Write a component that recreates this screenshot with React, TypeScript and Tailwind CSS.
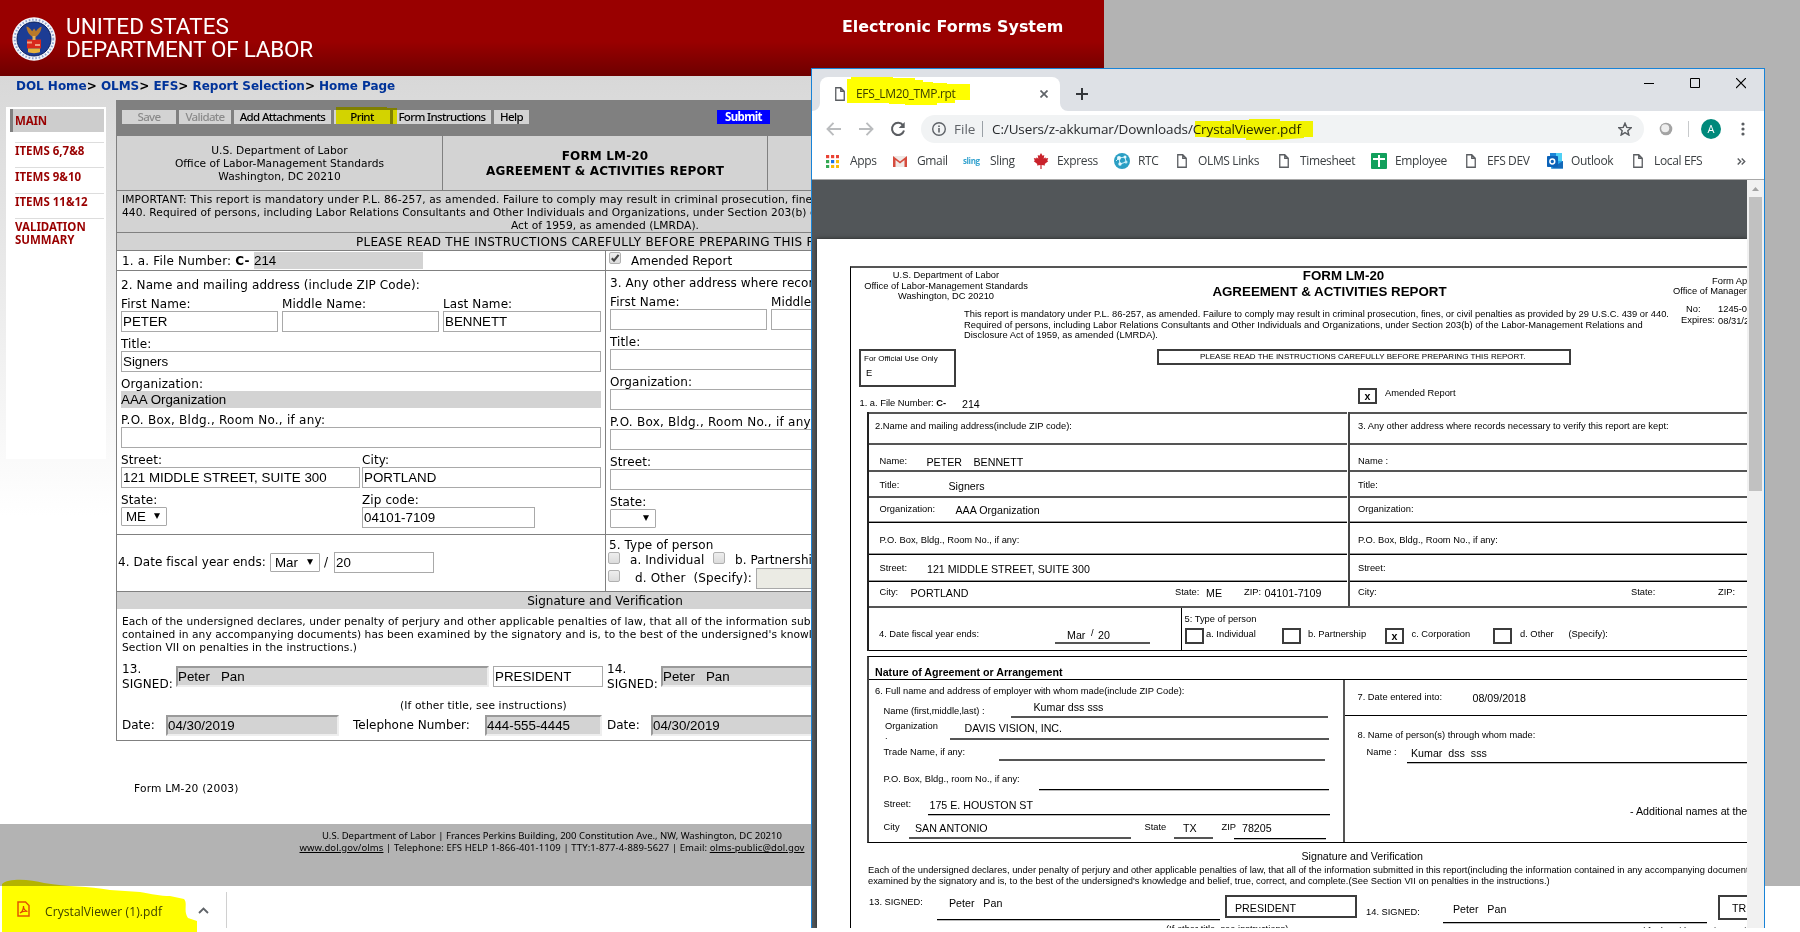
import React from "react";

/* ---------- shared pieces ---------- */

type Kids = { children?: React.ReactNode; className?: string };

const Label = ({ children, className = "tracking-[0.1px]" }: Kids) => (
  <div className={`h-[19px] whitespace-nowrap pt-[4px] text-[12px] leading-[16px] ${className}`}>{children}</div>
);

const Field = ({ children, className = "" }: Kids) => (
  <div
    className={`h-[21px] shrink-0 whitespace-pre border border-[#a9a9a9] bg-white pl-[1px] font-['Liberation_Sans',Arial,sans-serif] text-[13.33px] leading-[19px] tracking-normal ${className}`}
  >
    {children}
  </div>
);

const InsetField = ({ children, className = "" }: Kids) => (
  <div
    className={`h-[21px] shrink-0 whitespace-pre border-2 border-[#eee] border-l-[#9a9a9a] border-t-[#9a9a9a] bg-[#d3d3d3] font-['Liberation_Sans',Arial,sans-serif] text-[13.33px] leading-[17px] tracking-normal ${className}`}
  >
    {children}
  </div>
);

const Select = ({ children, className = "" }: Kids) => (
  <div
    className={`flex h-[19px] shrink-0 items-center justify-between rounded-[1px] border border-[#a9a9a9] bg-white pl-[4px] pr-[6px] font-['Liberation_Sans',Arial,sans-serif] text-[13.33px] leading-[17px] tracking-normal ${className}`}
  >
    <span>{children}</span>
    <svg width="6" height="6" viewBox="0 0 6 6" className="-mt-px">
      <path d="M0 0.3h6L3 6z" fill="#000" />
    </svg>
  </div>
);

const Check = ({ checked = false, className = "" }: { checked?: boolean; className?: string }) => (
  <span
    className={`block h-[12px] w-[12px] shrink-0 rounded-[2px] border border-[#b0b0b0] bg-linear-to-b from-[#eee] to-[#dcdcdc] ${className}`}
  >
    {checked && (
      <svg width="10" height="10" viewBox="0 0 10 10">
        <path d="M1.8 5.2 4 7.6 8.6 1.8" stroke="#444" strokeWidth="2.1" fill="none" />
      </svg>
    )}
  </span>
);

/* ---------- Department of Labor page ---------- */

const Seal = () => (
  <svg width="44" height="44" viewBox="0 0 44 44">
    <circle cx="22" cy="22" r="21.7" fill="#f4f6fb" />
    <circle cx="22" cy="22" r="19.3" fill="none" stroke="#8fa3cf" strokeWidth="2" strokeDasharray="1.6 1.8" />
    <circle cx="22" cy="22" r="17" fill="#1c3c94" stroke="#0c1f5c" strokeWidth="1" />
    <path d="M14.5 9.5c2 .3 4.5 2.8 5.6 4.8l2-2.8 1.900 2.800c1.200-2 3.500-4.300 5.500-4.600 0 4-2.600 8-5.700 10h-3.600c-3.100-2-5.700-6-5.700-10.200z" fill="#b9792a" />
    <rect x="15" y="22.5" width="14" height="9" fill="#d8291c" />
    <path d="M15 24.5h5v2h-5zM23 27h5v2h-5z" fill="#f0a080" />
    <path d="M16 31.5h12v3.500c-2 1.500-10 1.500-12 0z" fill="#e7b33c" />
    <path d="M20.5 19h3v4h-3z" fill="#e2b25a" />
  </svg>
);

const Header = () => (
  <header className="flex h-[76px] bg-linear-to-b from-[#990000] from-55% to-[#6e0000] pl-[12px] text-white">
    <div className="mt-[17px] h-[44px] w-[54px] shrink-0">
      <Seal />
    </div>
    <div className="mt-[15px] w-[776px] shrink-0 whitespace-nowrap font-[Roboto,sans-serif] text-[22.5px] leading-[23px]">
      <div className="tracking-[0.1px]">UNITED STATES</div>
      <div className="tracking-[-0.27px]">DEPARTMENT OF LABOR</div>
    </div>
    <div className="mt-[17px] whitespace-nowrap text-[15.9px] font-bold leading-[20px]">Electronic Forms System</div>
  </header>
);

const crumbs = ["DOL Home", "OLMS", "EFS", "Report Selection", "Home Page"];

const Breadcrumb = () => (
  <nav className="h-[24px] whitespace-pre pl-[16px] pt-[1px] text-[12px] font-bold leading-[18px] tracking-[-0.03px] text-[#003399]">
    {crumbs.map((c, i) => (
      <span key={c}>
        {c}
        {i < crumbs.length - 1 && <span className="text-black">&gt; </span>}
      </span>
    ))}
  </nav>
);

const Sidebar = () => (
  <aside className="ml-[6px] mt-[7px] h-[352px] w-[100px] shrink-0 bg-white pl-[4px] pr-[2px] pt-[2px] font-['Noto_Sans',sans-serif] text-[11.5px] font-bold leading-[13px] text-[#990000]">
    <div className="h-[23px] border-l-[3px] border-[#808080] bg-[#cdcdcd] pl-[2px] leading-[24px] tracking-[-0.2px]">MAIN</div>
    <div className="ml-[5px] mt-[10px]">
      <div className="h-[25px] border-t border-[#ddd] pt-[1px]">ITEMS 6,7&amp;8</div>
      <div className="h-[26px] border-t border-[#ddd] pt-[2px]">ITEMS 9&amp;10</div>
      <div className="h-[25px] border-t border-[#ddd] pt-[1px]">ITEMS 11&amp;12</div>
      <div className="border-t border-[#ddd] pt-[1px]">
        VALIDATION
        <br />
        SUMMARY
      </div>
    </div>
  </aside>
);

const Btn = ({ children, className = "" }: Kids) => (
  <div className={`h-[14px] shrink-0 whitespace-nowrap bg-[#d3d3d3] text-center ${className}`}>{children}</div>
);

const Toolbar = () => (
  <div className="flex h-[36px] gap-[3px] bg-[#808080] pl-[6px] pt-[10px] font-['Noto_Sans',sans-serif] text-[11.5px] font-medium leading-[14px] tracking-[-0.65px] text-black">
    <Btn className="w-[54px] text-[#8a8a8a]">Save</Btn>
    <Btn className="w-[52px] text-[#8a8a8a]">Validate</Btn>
    <Btn className="w-[97px]">Add Attachments</Btn>
    <div className="relative">
      <Btn className="w-[56px]">Print</Btn>
      <svg className="absolute -top-[3px] left-[2px] mix-blend-multiply" width="61" height="17" viewBox="0 0 61 17">
        <path d="M0 0h51v1h10v16H0z" fill="#ffff00" />
      </svg>
    </div>
    <Btn className="w-[98px]">Form Instructions</Btn>
    <Btn className="w-[35px]">Help</Btn>
    <Btn className="ml-[185px] w-[53px] !bg-[#0000ff] font-bold text-white">Submit</Btn>
  </div>
);

const AddressLeft = () => (
  <div className="w-[488px] shrink-0 pl-[4px]">
    <div className="h-[21px] pt-[6px] text-[12px] leading-[16px] tracking-[0.1px]">2. Name and mailing address (include ZIP Code):</div>
    <div className="flex gap-[4px]">
      <div className="w-[157px]">
        <Label>First Name:</Label>
        <Field>PETER</Field>
      </div>
      <div className="w-[157px]">
        <Label>Middle Name:</Label>
        <Field />
      </div>
      <div className="w-[158px]">
        <Label>Last Name:</Label>
        <Field>BENNETT</Field>
      </div>
    </div>
    <Label>Title:</Label>
    <Field className="w-[480px]">Signers</Field>
    <Label>Organization:</Label>
    <div className="h-[17px] w-[480px] bg-[#d3d3d3] font-['Liberation_Sans',Arial,sans-serif] text-[13.33px] leading-[17px]">
      AAA Organization
    </div>
    <Label className="tracking-[0.24px]">P.O. Box, Bldg., Room No., if any:</Label>
    <Field className="w-[480px]" />
    <div className="flex gap-[2px]">
      <div className="w-[239px]">
        <Label>Street:</Label>
        <Field>121 MIDDLE STREET, SUITE 300</Field>
        <Label>State:</Label>
        <Select className="w-[46px]">ME</Select>
      </div>
      <div className="w-[239px]">
        <Label>City:</Label>
        <Field>PORTLAND</Field>
        <Label>Zip code:</Label>
        <Field className="w-[173px]">04101-7109</Field>
      </div>
    </div>
  </div>
);

const AddressRight = () => (
  <div className="w-[499px] border-l border-[#808080] pl-[4px]">
    <div className="h-[19px] whitespace-nowrap pt-[4px] text-[12px] leading-[16px] tracking-[0.1px]">
      3. Any other address where records necessary to verify this report are kept:
    </div>
    <div className="flex gap-[4px]">
      <div className="w-[157px]">
        <Label>First Name:</Label>
        <Field />
      </div>
      <div className="w-[157px]">
        <Label>Middle Name:</Label>
        <Field />
      </div>
    </div>
    <Label>Title:</Label>
    <Field />
    <Label>Organization:</Label>
    <Field />
    <Label className="tracking-[0.24px]">P.O. Box, Bldg., Room No., if any:</Label>
    <Field />
    <Label>Street:</Label>
    <Field />
    <Label>State:</Label>
    <Select className="w-[46px]" />
  </div>
);

const Signature = () => (
  <div className="h-[132px] border-b border-[#808080] pl-[5px] text-[12px] leading-[15px]">
    <div className="h-[53px] whitespace-nowrap pt-[6px] text-[10.67px] leading-[13px] tracking-[0.05px]">
      Each of the undersigned declares, under penalty of perjury and other applicable penalties of law, that all of the information submitted
      <br />
      contained in any accompanying documents) has been examined by the signatory and is, to the best of the undersigned's knowledge
      <br />
      Section VII on penalties in the instructions.)
    </div>
    <div className="flex h-[34px] tracking-[0.1px]">
      <div className="w-[54px]">
        13.
        <br />
        SIGNED:
      </div>
      <InsetField className="mt-[4px] w-[313px]">{"Peter   Pan"}</InsetField>
      <Field className="ml-[4px] mt-[4px] w-[110px]">PRESIDENT</Field>
      <div className="ml-[4px] w-[54px] shrink-0">
        14.
        <br />
        SIGNED:
      </div>
      <InsetField className="mt-[4px] w-[313px]">{"Peter   Pan"}</InsetField>
    </div>
    <div className="h-[19px] pl-[278px] pt-[2px] text-[10.67px] tracking-[0.13px]">(If other title, see instructions)</div>
    <div className="flex h-[21px] leading-[21px]">
      <span className="w-[44px] shrink-0">Date:</span>
      <InsetField className="w-[173px]">04/30/2019</InsetField>
      <span className="ml-[14px] w-[132px] shrink-0 whitespace-nowrap">Telephone Number:</span>
      <InsetField className="w-[117px]">444-555-4445</InsetField>
      <span className="ml-[5px] w-[44px] shrink-0">Date:</span>
      <InsetField className="w-[173px]">04/30/2019</InsetField>
    </div>
  </div>
);

const EntryForm = () => (
  <main className="ml-[10px] w-[988px]">
    <Toolbar />
    <div className="border-l border-[#808080] bg-white">
      <div className="flex h-[55px] border-b border-[#808080] bg-[#d3d3d3] text-center">
        <div className="w-[325px] pt-[8px] text-[10.67px] leading-[13px]">
          U.S. Department of Labor
          <br />
          Office of Labor-Management Standards
          <br />
          Washington, DC 20210
        </div>
        <div className="w-[326px] border-x border-[#808080] pt-[13px] text-[12px] font-bold leading-[15px] tracking-[0.16px]">
          FORM LM-20
          <br />
          AGREEMENT &amp; ACTIVITIES REPORT
        </div>
      </div>
      <div className="h-[42px] whitespace-nowrap border-b border-[#808080] bg-[#d3d3d3] pl-[5px] pt-[2px] text-[10.67px] leading-[13px] tracking-[0.04px]">
        <span className="tracking-[0.1px]">
          IMPORTANT: This report is mandatory under P.L. 86-257, as amended. Failure to comply may result in criminal prosecution, fines, or civil
        </span>
        <br />
        440. Required of persons, including Labor Relations Consultants and Other Individuals and Organizations, under Section 203(b) of the
        <div className="w-[966px] text-center">Act of 1959, as amended (LMRDA).</div>
      </div>
      <div className="h-[18px] whitespace-nowrap border-b border-[#808080] bg-[#d3d3d3] pl-[239px] text-[12px] leading-[18px] tracking-[0.28px]">
        PLEASE READ THE INSTRUCTIONS CAREFULLY BEFORE PREPARING THIS REPORT.
      </div>
      <div className="flex h-[20px] border-b border-[#808080] text-[12px] leading-[20px]">
        <div className="flex w-[488px] shrink-0 pl-[5px] tracking-[0.17px]">
          <span className="w-[132px] shrink-0">
            1. a. File Number: <b>C-</b>
          </span>
          <span className="mt-px h-[17px] w-[169px] bg-[#d3d3d3] font-['Liberation_Sans',Arial,sans-serif] text-[13.33px] leading-[17px] tracking-normal">214</span>
        </div>
        <div className="flex border-l border-[#808080] pl-[3px]">
          <Check checked className="mt-[1px]" />
          <span className="ml-[10px]">Amended Report</span>
        </div>
      </div>
      <div className="flex h-[264px] border-b border-[#808080]">
        <AddressLeft />
        <AddressRight />
      </div>
      <div className="flex h-[57px] border-b border-[#808080] text-[12px] leading-[16px] tracking-[0.07px]">
        <div className="flex w-[488px] shrink-0 pl-[1px] pt-[17px]">
          <span className="w-[152px] shrink-0 pt-[2px]">4. Date fiscal year ends:</span>
          <Select className="mt-px w-[50px]">Mar</Select>
          <span className="w-[14px] pl-[4px] pt-[2px]">/</span>
          <Field className="w-[100px]">20</Field>
        </div>
        <div className="w-[498px] border-l border-[#808080] pl-[2px] pt-[2px]">
          <div className="h-[15px] pl-[1px]">5. Type of person</div>
          <div className="flex h-[16px] whitespace-nowrap">
            <Check />
            <span className="w-[93px] pl-[10px]">a. Individual</span>
            <Check />
            <span className="pl-[10px]">b. Partnership</span>
          </div>
          <div className="flex whitespace-pre">
            <Check className="mt-[2px]" />
            <span className="w-[136px] pl-[15px] pt-[2px] tracking-[0.15px]">{"d. Other  (Specify):"}</span>
            <Field className="w-[200px] !bg-[#ebebe4]" />
          </div>
        </div>
      </div>
      <div className="h-[17px] w-[976px] bg-[#d3d3d3] text-center text-[12px] leading-[18px]">Signature and Verification</div>
      <Signature />
    </div>
    <div className="pl-[18px] pt-[40px] text-[10.67px] leading-[16px] tracking-[0.18px]">Form LM-20 (2003)</div>
  </main>
);

const Footer = () => (
  <footer className="h-[62px] whitespace-nowrap pt-[6px] text-center font-['Noto_Sans',sans-serif] text-[9.5px] leading-[12px]">
    U.S. Department of Labor | Frances Perkins Building, 200 Constitution Ave., NW, Washington, DC 20210
    <div className="tracking-[0.09px]">
      <u>www.dol.gov/olms</u> | Telephone: EFS HELP 1-866-401-1109 | TTY:1-877-4-889-5627 | Email: <u>olms-public@dol.gov</u>
    </div>
  </footer>
);

const DownloadBar = () => (
  <div className="relative flex h-[42px] items-center bg-white pl-[17px] font-['Open_Sans',sans-serif] text-[12px] text-[#3c4043]">
    <svg className="mt-[4px]" width="13" height="16" viewBox="0 0 13 16">
      <path d="M1 1h7.5L12 4.5V15H1z" fill="#fff" stroke="#e2574c" strokeWidth="1.5" />
      <path d="M3 12c2-1 3.500-4 3.500-7C6.500 8 8 10 10.500 10.500 8 10 5 10.500 3 12z" fill="none" stroke="#e2402f" strokeWidth="1.2" />
    </svg>
    <span className="ml-[15px] mt-[10px] w-[153px] whitespace-nowrap tracking-[0.1px]">CrystalViewer (1).pdf</span>
    <svg className="mt-[7px]" width="11" height="7" viewBox="0 0 11 7">
      <path d="M1 6l4.5-4.5L10 6" fill="none" stroke="#5f6368" strokeWidth="1.8" />
    </svg>
    <div className="ml-[17px] mt-[6px] h-[36px] w-px bg-[#d0d0d0]" />
    <svg className="absolute -top-[8px] left-0 mix-blend-multiply" width="200" height="54" viewBox="0 0 200 54">
      <path d="M2 6C8 0 30 1 44 5c24 4 44 3 66 7l30 2c12 2 20 4 30 4l14 3c4 4-1 12 4 19l9 3v11H2z" fill="#ffff00" />
    </svg>
  </div>
);

/* ---------- Chrome window ---------- */

const PageIcon = () => (
  <svg width="10" height="14" viewBox="0 0 10 14">
    <path d="M.75.75h5l3.5 3.500v9H.75z M5.750.750v3.500h3.500" fill="#fff" stroke="#5a5d61" strokeWidth="1.3" />
  </svg>
);

const TabStrip = () => (
  <div className="flex h-[42px] bg-[#dee1e6]">
    <svg className="mt-[34px]" width="8" height="8" viewBox="0 0 8 8">
      <path d="M8 0v8H0a8 8 0 0 0 8-8z" fill="#fff" />
    </svg>
    <div className="mt-[8px] flex h-[34px] w-[240px] items-center rounded-t-[8px] bg-white pl-[15px]">
      <PageIcon />
      <div className="relative ml-[11px] w-[184px] whitespace-nowrap font-['Open_Sans',sans-serif] text-[12px] tracking-[-0.35px] text-[#3c4043]">
        EFS_LM20_TMP.rpt
        <svg className="absolute -left-[9px] -top-[8px] mix-blend-multiply" width="123" height="28" viewBox="0 0 123 28">
          <path d="M0 2h4V0h42v1h22v2h8v2h10v1h14v1h23v16h-15v3H90v2H58v-1H42v-1H0z" fill="#ffff00" />
        </svg>
      </div>
      <svg width="8" height="8" viewBox="0 0 8 8">
        <path d="M.5.5l7 7M7.500.500l-7 7" stroke="#5f6368" strokeWidth="1.7" />
      </svg>
    </div>
    <svg className="mt-[34px]" width="8" height="8" viewBox="0 0 8 8">
      <path d="M0 0v8h8a8 8 0 0 1-8-8z" fill="#fff" />
    </svg>
    <svg className="ml-[8px] mt-[19px]" width="12" height="12" viewBox="0 0 12 12">
      <path d="M6 0v12M0 6h12" stroke="#33363a" strokeWidth="2" />
    </svg>
    <div className="ml-auto mr-[18px] mt-[9px] flex gap-[36px]">
      <svg width="10" height="11" viewBox="0 0 10 11">
        <path d="M0 5.5h10" stroke="#000" />
      </svg>
      <svg width="10" height="11" viewBox="0 0 10 11">
        <path d="M.5.5h9v9h-9z" fill="none" stroke="#000" />
      </svg>
      <svg width="10" height="11" viewBox="0 0 10 11">
        <path d="M0 0l10 10M10 0L0 10" stroke="#000" strokeWidth="1.2" />
      </svg>
    </div>
  </div>
);

const AddressBar = () => (
  <div className="flex h-[36px] items-center pl-[14px] font-['Open_Sans',sans-serif]">
    <svg width="16" height="14" viewBox="0 0 16 14" className="mr-[16px]">
      <path d="M15 7H2M7.500.800L1.500 7l6 6.200" fill="none" stroke="#babcbe" strokeWidth="1.9" />
    </svg>
    <svg width="16" height="14" viewBox="0 0 16 14" className="mr-[16px]">
      <path d="M1 7h13M8.500.800L14.500 7l-6 6.200" fill="none" stroke="#babcbe" strokeWidth="1.9" />
    </svg>
    <svg width="16" height="16" viewBox="0 0 16 16" className="mr-[15px]">
      <path d="M13 4.200A6.100 6.100 0 1 0 14 9.500" fill="none" stroke="#5a5d61" strokeWidth="2" />
      <path d="M14.700 1v6H8.700z" fill="#5a5d61" />
    </svg>
    <div className="flex h-[28px] w-[723px] items-center rounded-full bg-[#f1f3f4] pl-[11px] text-[13.5px]">
      <svg width="14" height="14" viewBox="0 0 14 14">
        <circle cx="7" cy="7" r="6.3" fill="none" stroke="#5f6368" strokeWidth="1.4" />
        <path d="M7 6v4.500M7 3.400v1.500" stroke="#5f6368" strokeWidth="1.6" />
      </svg>
      <span className="ml-[8px] w-[28px] text-[#5f6368]">File</span>
      <span className="mr-[9px] h-[16px] w-px bg-[#9aa0a6]" />
      <span className="relative w-[626px] whitespace-nowrap tracking-[-0.12px] text-[#27292c]">
        C:/Users/z-akkumar/Downloads/CrystalViewer.pdf
        <svg className="absolute left-[203px] top-0 mix-blend-multiply" width="118" height="21" viewBox="0 0 118 21">
          <path d="M0 2h35V1h19V0h31v2h33v16h-9v1l-30 2H51v-2H26l-18-1H0z" fill="#ffff00" />
        </svg>
      </span>
      <svg width="14" height="14" viewBox="0 0 24 24">
        <path d="M12 2l3 7.200 7.700.600-5.900 5 1.900 7.600L12 18.200l-6.700 4.200 1.900-7.600-5.900-5 7.700-.600z" fill="none" stroke="#5a5d61" strokeWidth="2.4" />
      </svg>
    </div>
    <svg width="14" height="14" viewBox="0 0 14 14" className="ml-[15px]">
      <circle cx="7" cy="7" r="6.3" fill="#a3a3a3" />
      <circle cx="6.2" cy="6.2" r="4" fill="#eeeeee" />
    </svg>
    <span className="ml-[15px] h-[16px] w-px bg-[#c8cacc]" />
    <div className="ml-[12px] h-[20px] w-[20px] rounded-full bg-[#00897b] text-center text-[11px] leading-[20px] text-white">A</div>
    <svg width="4" height="14" viewBox="0 0 4 14" className="ml-[20px]">
      <circle cx="2" cy="2" r="1.6" fill="#5a5d61" />
      <circle cx="2" cy="7" r="1.6" fill="#5a5d61" />
      <circle cx="2" cy="12" r="1.6" fill="#5a5d61" />
    </svg>
  </div>
);

const appColors = ["#ea4335", "#ea4335", "#ea4335", "#34a853", "#1a73e8", "#fbbc05", "#34a853", "#fbbc05", "#fbbc05"];

const AppsIcon = () => (
  <svg width="13" height="13" viewBox="0 0 13 13">
    {appColors.map((c, i) => (
      <rect key={i} x={(i % 3) * 5} y={Math.floor(i / 3) * 5} width="3.2" height="3.2" fill={c} />
    ))}
  </svg>
);

const GmailIcon = () => (
  <svg width="14" height="11" viewBox="0 0 14 11">
    <rect width="14" height="11" rx="1" fill="#efe9e6" />
    <path d="M0 11V0l7 5.500L14 0v11h-2.500V4L7 7.600 2.500 4v7z" fill="#d54b3d" />
  </svg>
);

const MapleIcon = () => (
  <svg width="16" height="16" viewBox="0 0 16 16">
    <path d="M8 0l1.600 2.800 1.700-.700-.600 3.600 1.600-1.500.5 1.200 2.400-.300-.900 2.300.9.800-3.500 2.800.3 1.400-3.400-.500V16H7.400v-4.100l-3.400.500.3-1.400L.8 8.200l.9-.800-.900-2.300 2.400.3.500-1.200 1.600 1.500-.600-3.600 1.700.7z" fill="#c9222b" />
  </svg>
);

const GlobeIcon = () => (
  <svg width="16" height="16" viewBox="0 0 16 16">
    <circle cx="8" cy="8" r="8" fill="#2b9fc4" />
    <path d="M5 5l6-1M5 5l1 6M6 11l6-2M11 4l1 5M5 5l-3 3" stroke="#c8eef8" strokeWidth="1" />
    <circle cx="5" cy="5" r="2" fill="#e6f8fd" />
    <circle cx="11" cy="4" r="1.5" fill="#e6f8fd" />
    <circle cx="6" cy="11" r="1.7" fill="#e6f8fd" />
    <circle cx="12" cy="9" r="1.5" fill="#bfeaf6" />
  </svg>
);

const SheetIcon = () => (
  <svg width="16" height="16" viewBox="0 0 16 16">
    <rect width="16" height="16" rx="1" fill="#12a05c" />
    <path d="M8 2v12M2 6h12" stroke="#fff" strokeWidth="2" />
  </svg>
);

const OutlookIcon = () => (
  <svg width="16" height="16" viewBox="0 0 16 16">
    <path d="M3 0h12v9H3z" fill="#50d0f5" />
    <path d="M3 0h6v5H3z" fill="#1a86d9" />
    <path d="M4 8h12v7.500H4z" fill="#2aa6ea" />
    <path d="M4 15.500L16 8v7.500z" fill="#1469b8" />
    <rect y="3" width="11" height="11" rx=".8" fill="#0b62b8" />
    <circle cx="5.3" cy="8.5" r="2.4" fill="none" stroke="#fff" strokeWidth="1.5" />
  </svg>
);

const Bookmark = ({ icon, children, className = "" }: Kids & { icon: React.ReactNode }) => (
  <div className={`flex shrink-0 items-center whitespace-nowrap ${className}`}>
    <span className="flex w-[24px] shrink-0 items-center">{icon}</span>
    {children}
  </div>
);

const Bookmarks = () => (
  <div className="flex h-[33px] items-center border-b border-[#a8a8a8] pb-[4px] pl-[14px] font-['Open_Sans',sans-serif] text-[12px] tracking-[-0.36px] text-[#3c4043]">
    <Bookmark className="w-[67px]" icon={<AppsIcon />}>Apps</Bookmark>
    <Bookmark className="w-[70px]" icon={<GmailIcon />}>Gmail</Bookmark>
    <Bookmark
      className="w-[70px] [&>span]:w-[27px]"
      icon={<span className="text-[8px] font-bold tracking-[-0.4px] text-[#35a3cf]">sling</span>}
    >
      Sling
    </Bookmark>
    <Bookmark className="w-[81px]" icon={<MapleIcon />}>Express</Bookmark>
    <Bookmark className="w-[63px]" icon={<GlobeIcon />}>RTC</Bookmark>
    <Bookmark className="w-[102px] [&>span]:w-[21px]" icon={<PageIcon />}>OLMS Links</Bookmark>
    <Bookmark className="w-[92px] [&>span]:w-[21px]" icon={<PageIcon />}>Timesheet</Bookmark>
    <Bookmark className="w-[95px]" icon={<SheetIcon />}>Employee</Bookmark>
    <Bookmark className="w-[81px] [&>span]:w-[21px]" icon={<PageIcon />}>EFS DEV</Bookmark>
    <Bookmark className="w-[86px]" icon={<OutlookIcon />}>Outlook</Bookmark>
    <Bookmark className="w-[104px] [&>span]:w-[21px]" icon={<PageIcon />}>Local EFS</Bookmark>
    <svg width="9" height="7" viewBox="0 0 9 7">
      <path d="M.7.5l3 3-3 3M4.700.500l3 3-3 3" fill="none" stroke="#5a5d61" strokeWidth="1.4" />
    </svg>
  </div>
);

/* ---------- PDF document ---------- */

const LINE = "border-t-2 border-[#555]";
const THIN = "border-t border-black shadow-[0_-1px_0_#999]";

/* label text (7pt) and filled-in value (8pt) */
const S = ({ children, className = "" }: Kids) => <span className={`block shrink-0 ${className}`}>{children}</span>;
const V = ({ children, className = "" }: Kids) => (
  <span className={`mt-px block shrink-0 text-[10.67px] ${className}`}>{children}</span>
);

const Box = ({ children, className = "" }: Kids) => (
  <span className={`block h-[16px] w-[19px] shrink-0 border-2 border-[#3c3c3c] text-center text-[10.67px] font-bold leading-[13px] text-black ${className}`}>
    {children}
  </span>
);

const Underline = ({ className = "" }: Kids) => <div className={`h-[2px] shrink-0 bg-[#555] ${className}`} />;
const ThinUnderline = ({ className = "" }: Kids) => (
  <div className={`h-[2px] shrink-0 border-b border-t border-b-[#bbb] border-t-black ${className}`} />
);

const PdfHeader = () => (
  <div className="flex h-[81px]">
    <div className="w-[822px] shrink-0">
      <div className="flex h-[40px]">
        <div className="w-[190px] pt-[2px] text-center leading-[10.5px]">
          U.S. Department of Labor
          <br />
          Office of Labor-Management Standards
          <br />
          Washington, DC 20210
        </div>
        <div className="w-[577px] text-center text-[13.33px] font-bold leading-[16px] text-black">
          <div className="pl-[28px]">FORM LM-20</div>
          <div>AGREEMENT &amp; ACTIVITIES REPORT</div>
        </div>
      </div>
      <div className="ml-[113px] pt-[1px] leading-[10.67px] tracking-[0.012px]">
        This report is mandatory under P.L. 86-257, as amended. Failure to comply may result in criminal prosecution, fines, or civil penalties as provided by 29 U.S.C. 439 or 440.
        <br />
        Required of persons, including Labor Relations Consultants and Other Individuals and Organizations, under Section 203(b) of the Labor-Management Relations and
        <br />
        Disclosure Act of 1959, as amended (LMRDA).
      </div>
    </div>
    <div className="pt-[8px] leading-[10px]">
      <div className="pl-[39px]">Form Approved</div>
      <div className="h-[18px]">Office of Management</div>
      <div className="flex h-[11px]">
        <S className="w-[45px] pl-[13px]">No:</S>
        <S>1245-0003</S>
      </div>
      <div className="flex">
        <S className="w-[45px] pl-[8px]">Expires:</S>
        <S className="pt-px">08/31/2019</S>
      </div>
    </div>
  </div>
);

type Side = { left: React.ReactNode; right: React.ReactNode; h: string; line: string; pad: string };

const PdfRow = ({ left, right, h, line, pad }: Side) => (
  <div className={`flex ${h}`}>
    <div className={`mr-px flex w-[478px] shrink-0 pl-[10.5px] ${line} ${pad}`}>{left}</div>
    <div className="flex flex-1 border-l-2 border-[#444]">
      <div className={`flex flex-1 pl-[8px] ${line} ${pad}`}>{right}</div>
    </div>
  </div>
);

const PdfAddress = () => (
  <div className="ml-[16px] border-l-2 border-[#222]">
    <PdfRow h="h-[31px]" line={LINE} pad="pt-[6px]" left={<S className="-ml-[4.5px]">2.Name and mailing address(include ZIP code):</S>} right={<S>3. Any other address where records necessary to verify this report are kept:</S>} />
    <PdfRow h="h-[27px]" line={LINE} pad="pt-[10px]" left={<><S className="w-[47px]">Name:</S><V className="w-[47px]">PETER</V><V>BENNETT</V></>} right={<S>Name :</S>} />
    <PdfRow h="h-[26px]" line={LINE} pad="pt-[7px]" left={<><S className="w-[69px]">Title:</S><V>Signers</V></>} right={<S>Title:</S>} />
    <PdfRow h="h-[26px]" line={LINE} pad="pt-[5px]" left={<><S className="w-[76px]">Organization:</S><V>AAA Organization</V></>} right={<S>Organization:</S>} />
    <PdfRow h="h-[32px]" line={THIN} pad="pt-[11px]" left={<S>P.O. Box, Bldg., Room No., if any:</S>} right={<S>P.O. Box, Bldg., Room No., if any:</S>} />
    <PdfRow h="h-[27px]" line={THIN} pad="pt-[7px]" left={<><S className="w-[47.5px]">Street:</S><V>121 MIDDLE STREET, SUITE 300</V></>} right={<S>Street:</S>} />
    <PdfRow
      h="h-[25px]"
      line={THIN}
      pad="pt-[4px]"
      left={<><S className="w-[31px]">City:</S><V className="w-[264.5px]">PORTLAND</V><S className="w-[31px]">State:</S><V className="w-[38px]">ME</V><S className="w-[20.5px]">ZIP:</S><V>04101-7109</V></>}
      right={<><S className="w-[273px]">City:</S><S className="w-[87px]">State:</S><S>ZIP:</S></>}
    />
    <div className={`flex h-[45px] border-b border-b-black ${LINE}`}>
      <div className="w-[312px] shrink-0 pl-[10px] pt-[20px]">
        <div className="flex h-[14px]">
          <S className="w-[188px]">4. Date fiscal year ends:</S>
          <V className="w-[24px]">Mar</V>
          <S className="-mt-px w-[7px]">/</S>
          <V>20</V>
        </div>
        <Underline className="ml-[176px] w-[95px]" />
      </div>
      <div className="flex-1 border-l border-black pl-[2.5px] pt-[5px]">
        <div className="h-[15px]">5: Type of person</div>
        <div className="flex">
          <Box />
          <S className="w-[78.5px] pl-[2.5px]">a. Individual</S>
          <Box />
          <S className="w-[84px] pl-[7px]">b. Partnership</S>
          <Box>x</Box>
          <S className="w-[89px] pl-[7.5px]">c. Corporation</S>
          <Box />
          <S className="w-[56.5px] pl-[8px]">d. Other</S>
          <S>(Specify):</S>
        </div>
      </div>
    </div>
  </div>
);

const Employer = () => (
  <div className="h-[162px] w-[474px] shrink-0 pl-[14.5px]">
    <div className="-ml-[8.5px] pt-[5px]">6. Full name and address of employer with whom made(include ZIP Code):</div>
    <div className="flex h-[19px]">
      <S className="w-[150px] pt-[8px]">Name (first,middle,last) :</S>
      <V className="pt-[3px]">Kumar dss sss</V>
    </div>
    <Underline className="ml-[127.5px] w-[317px]" />
    <div className="flex h-[20px]">
      <S className="w-[81px] pl-[1.5px] pt-[3px] leading-[10px]">
        Organization
        <br />.
      </S>
      <V className="pt-[3px]">DAVIS VISION, INC.</V>
    </div>
    <Underline className="ml-[66.5px] w-[379px]" />
    <div className="h-[19px] pt-[6px]">Trade Name, if any:</div>
    <Underline className="ml-[115.5px] w-[326px]" />
    <div className="h-[28px] pt-[12px]">P.O. Box, Bldg., room No., if any:</div>
    <ThinUnderline className="ml-[155.5px] w-[290px]" />
    <div className="flex h-[23px] pt-[7px]">
      <S className="w-[46px]">Street:</S>
      <V>175 E. HOUSTON ST</V>
    </div>
    <ThinUnderline className="ml-[44.5px] w-[402px]" />
    <div className="flex h-[21px] pt-[5px]">
      <S className="w-[31.5px]">City</S>
      <V className="w-[229.5px]">SAN ANTONIO</V>
      <S className="w-[38.5px]">State</S>
      <V className="w-[38.5px]">TX</V>
      <S className="w-[20.5px]">ZIP</S>
      <V>78205</V>
    </div>
    <div className="flex">
      <Underline className="ml-[25.5px] w-[222px]" />
      <Underline className="ml-[43px] w-[39px]" />
      <ThinUnderline className="ml-[21px] mt-px w-[92px]" />
    </div>
  </div>
);

const PdfNature = () => (
  <div className="ml-[16px] mt-[5px] h-[187px] border-b border-l-2 border-t border-b-black border-l-[#444] border-t-black">
    <div className="h-[22px] pl-[6px] pt-[9px] text-[10.67px] font-bold leading-[13px] text-black">Nature of Agreement or Arrangement</div>
    <div className="flex border-t border-black">
      <Employer />
      <div className="flex-1 border-l-2 border-[#555]">
        <div className="flex h-[36px] border-b border-black pl-[12.5px] pt-[11px]">
          <S className="w-[115px]">7. Date entered into:</S>
          <V>08/09/2018</V>
        </div>
        <div className="pl-[12.5px] pt-[13px]">
          <div className="h-[17px]">8. Name of person(s) through whom made:</div>
          <div className="flex h-[16px] whitespace-pre pl-[9px]">
            <S className="w-[44.5px]">Name :</S>
            <V className="-mt-px">{"Kumar  dss  sss"}</V>
          </div>
          <ThinUnderline className="ml-[49px]" />
          <div className="pl-[272.5px] pt-[41px] text-[10.67px]">- Additional names at the end</div>
        </div>
      </div>
    </div>
  </div>
);

const PdfSignature = () => (
  <div className="pl-[17px]">
    <div className="pl-[433.5px] pt-[7px] text-[10.67px]">Signature and Verification</div>
    <div className="pt-[3px] leading-[11px]">
      Each of the undersigned declares, under penalty of perjury and other applicable penalties of law, that all of the information submitted in this report(including the information contained in any accompanying documents) has been
      <br />
      examined by the signatory and is, to the best of the undersigned's knowledge and belief, true, correct, and complete.(See Section VII on penalties in the instructions.)
    </div>
    <div className="flex pt-[8px]">
      <S className="w-[69px] pl-[1px] pt-px">13. SIGNED:</S>
      <div className="w-[288px] shrink-0">
        <div className="h-[24px] whitespace-pre pl-[12px] pt-[2px] text-[10.67px]">{"Peter   Pan"}</div>
        <ThinUnderline className="w-[283px]" />
        <div className="whitespace-nowrap pl-[229px] pt-[2px]">(If other title, see instructions)</div>
      </div>
      <div className="h-[23px] w-[132px] shrink-0 border-2 border-[#3c3c3c] pl-[8px] pt-[5px] text-[10.67px]">PRESIDENT</div>
      <S className="w-[86px] pl-[9px] pt-[11px]">14. SIGNED:</S>
      <div className="w-[275px] shrink-0">
        <div className="h-[27px] whitespace-pre pl-[10px] pt-[8px] text-[10.67px]">{"Peter   Pan"}</div>
        <ThinUnderline className="w-[264px]" />
        <div className="whitespace-nowrap pl-[199px] pt-[1px]">(If other title, see instructions)</div>
      </div>
      <div className="h-[25px] w-[132px] shrink-0 border-2 border-[#3c3c3c] pl-[12px] pt-[5px] text-[10.67px]">TREASURER</div>
    </div>
  </div>
);

const PdfPage = () => (
  <div className="ml-[5px] mt-[59px] h-[689px] w-[930px] overflow-hidden bg-white pl-[33px] pt-[27px] font-['Liberation_Sans',Arial,sans-serif] text-[9.33px] leading-[12px] text-black shadow-[0_0_4px_#222]">
    <div className="h-[900px] whitespace-nowrap border-l border-t-2 border-l-black border-t-[#555]">
      <PdfHeader />
      <div className="flex h-[38px]">
        <div className="ml-[8px] h-[38px] w-[97px] shrink-0 border-2 border-[#3c3c3c] pl-[3px] pt-[2px] text-[8px]">
          For Official Use Only
          <div className="pl-[2px] pt-[2px] text-[9.33px]">E</div>
        </div>
        <div className="ml-[201px] h-[16px] w-[414px] border-2 border-[#3c3c3c] pl-[41px] text-[8px] leading-[11px]">
          PLEASE READ THE INSTRUCTIONS CAREFULLY BEFORE PREPARING THIS REPORT.
        </div>
      </div>
      <div className="flex h-[25px] pl-[8.5px]">
        <S className="w-[102.5px] pt-[10px]">
          1. a. File Number: <b>C-</b>
        </S>
        <V className="w-[396px] pt-[10px]">214</V>
        <Box className="mt-px">x</Box>
        <S className="pl-[8px]">Amended Report</S>
      </div>
      <PdfAddress />
      <PdfNature />
      <PdfSignature />
    </div>
  </div>
);

const BrowserWindow = () => (
  <section className="absolute left-[811px] top-[68px] h-[860px] w-[954px] border-x border-t border-[#1883d7] bg-white">
    <TabStrip />
    <AddressBar />
    <Bookmarks />
    <div className="flex h-[748px] overflow-hidden bg-[#525659]">
      <div className="w-[935px] shrink-0 overflow-hidden">
        <PdfPage />
      </div>
      <div className="w-[17px] bg-[#f1f1f1] px-[2px] pt-[7px]">
        <svg className="mx-auto" width="7" height="4" viewBox="0 0 7 4">
          <path d="M0 4h7L3.500 0z" fill="#a3a3a3" />
        </svg>
        <div className="mt-[6px] h-[294px] bg-[#c1c1c1]" />
      </div>
    </div>
  </section>
);

export default function App() {
  return (
    <div className="relative h-[932px] w-[1800px] overflow-hidden bg-white font-['DejaVu_Sans',Verdana,sans-serif] text-black">
      <div className="h-[886px] bg-[#b3b3b3]">
        <div className="w-[1104px]">
          <Header />
          <div className="h-[748px] bg-[linear-gradient(#d8d8d8,#fff_440px)]">
            <Breadcrumb />
            <div className="flex">
              <Sidebar />
              <EntryForm />
            </div>
          </div>
          <Footer />
        </div>
      </div>
      <DownloadBar />
      <BrowserWindow />
    </div>
  );
}
